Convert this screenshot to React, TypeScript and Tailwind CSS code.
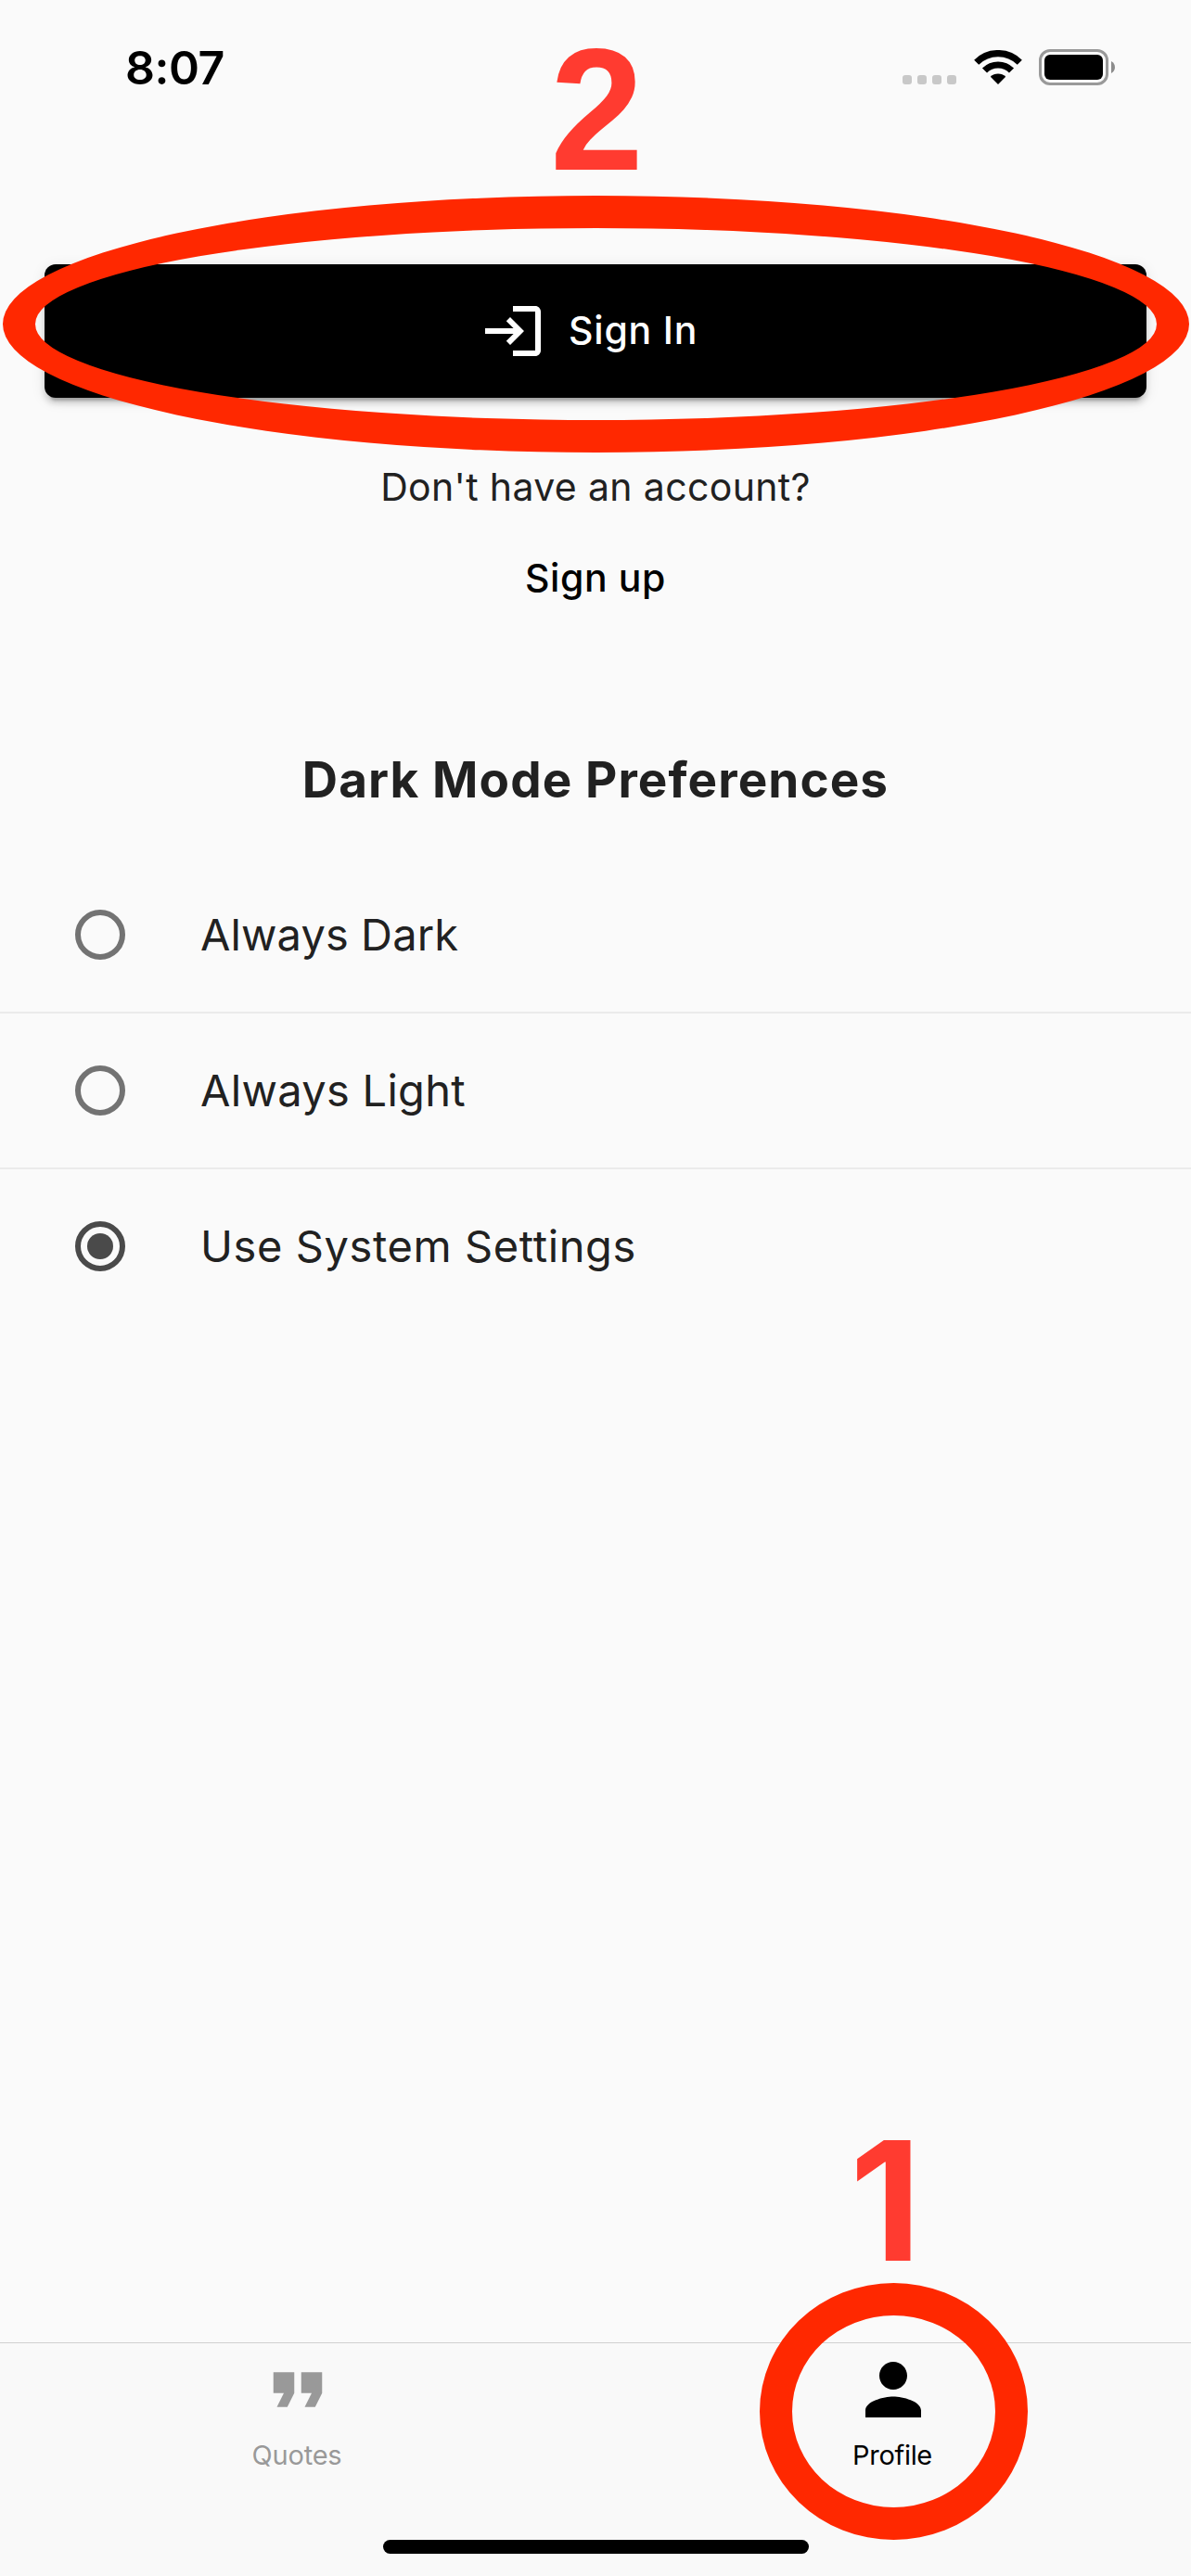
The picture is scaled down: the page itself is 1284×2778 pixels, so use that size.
import React from "react";

function StatusBar() {
  return (
    <header className="flex h-[145px] items-center justify-between pl-[135px] pr-[82px]">
      <span className="text-[50px] leading-[60px] font-semibold tracking-[-0.5px] text-black">8:07</span>
      <div className="flex h-[39px] items-center">
        <div className="mb-px flex items-end gap-[6px] self-end">
          {[0, 1, 2, 3].map((dot) => (
            <span key={dot} className="size-[10px] rounded-[3px] bg-[#c8c8c8]" />
          ))}
        </div>
        <svg className="ml-[19px] h-[37px] w-[52px]" viewBox="-1 0 52 37" fill="none" stroke="#000">
          <path d="M1.7 13.2a33 33 0 0 1 46.6 0" strokeWidth="7.2" />
          <path d="M10.5 22a20.5 20.5 0 0 1 29 0" strokeWidth="7.2" />
          <path d="M25 37l-8.2-8.3a11.8 11.8 0 0 1 16.4 0z" fill="#000" stroke="none" />
        </svg>
        <div className="ml-[18px] flex h-[39px] w-[75px] rounded-[12px] border-3 border-[#999] p-[3px]">
          <div className="flex-1 rounded-[6px] bg-black" />
        </div>
        <svg className="ml-[3px] h-[13px] w-[4px]" viewBox="0 0 4 13">
          <path d="M0 0C5.3 2.5 5.3 10.5 0 13z" fill="#8c8c8c" />
        </svg>
      </div>
    </header>
  );
}

function SignIn() {
  return (
    <section className="relative mt-[140px] flex flex-col items-center px-[48px]">
      <button className="flex h-[144px] w-full items-center rounded-[12px] bg-black pl-[469px] text-white shadow-[0_9px_3px_-6px_rgba(0,0,0,0.2),0_6px_6px_rgba(0,0,0,0.14),0_3px_15px_rgba(0,0,0,0.1)]">
        <svg className="size-[72px]" viewBox="0 0 24 24" fill="currentColor">
          <path d="M11 7L9.6 8.4l2.6 2.6H2v2h10.2l-2.6 2.6L11 17l5-5-5-5zm9 12h-8v2h8c1.1 0 2-.9 2-2V5c0-1.1-.9-2-2-2h-8v2h8v14z" />
        </svg>
        <span className="ml-[24px] pb-[2px] text-[41px] leading-[60px] font-medium tracking-[0.8px]">Sign In</span>
      </button>
      <p className="mt-[66px] text-[41px] leading-[60px] tracking-[0.35px] text-[#212121]">Don't have an account?</p>
      <a className="mt-[38px] text-[41px] leading-[60px] font-medium tracking-[0.6px] text-black">Sign up</a>
      <Callout label="2" labelClass="left-[593px] top-[-266px]" ringClass="left-[3px] top-[-74px] w-[1279px] h-[277px]" />
    </section>
  );
}

function Callout({ label, labelClass, ringClass }: { label: string; labelClass: string; ringClass: string }) {
  return (
    <>
      <span
        className={`absolute font-bold leading-[200px] text-[#ff3b30] ${
          label === "1"
            ? "font-['Inter'] text-[179px]"
            : "origin-left scale-x-97 font-['Liberation_Sans'] text-[187px]"
        } ${labelClass}`}
      >
        {label}
      </span>
      <span className={`absolute rounded-[50%] border-[35px] border-[#ff2800] ${ringClass}`} />
    </>
  );
}

const modes = [
  { name: "Always Dark", tracking: "tracking-[0.1px]" },
  { name: "Always Light", tracking: "tracking-[0.3px]" },
  { name: "Use System Settings", tracking: "tracking-[0.6px]" },
];

function Preferences() {
  const selected = 2;
  return (
    <section className="mt-[158px]">
      <h2 className="text-center text-[53px] leading-[60px] font-bold tracking-[1.1px] text-[#212121]">
        Dark Mode Preferences
      </h2>
      <ul className="mt-[54px]">
        {modes.map((mode, i) => (
          <li
            key={mode.name}
            className={`flex h-[168px] items-center border-b-2 pl-[81px] ${
              i < 2 ? "border-[#ebebeb]" : "border-transparent"
            }`}
          >
            <span
              className={`flex size-[54px] items-center justify-center rounded-full border-6 ${
                i === selected ? "border-[#4a4a4a]" : "border-[#737373]"
              }`}
            >
              {i === selected && <span className="size-[28px] rounded-full bg-[#4a4a4a]" />}
            </span>
            <span className={`ml-[81px] text-[47px] leading-[60px] text-[#212121] ${mode.tracking}`}>{mode.name}</span>
          </li>
        ))}
      </ul>
    </section>
  );
}

function TabBar() {
  return (
    <nav className="relative mt-auto flex h-[252px] flex-col border-t border-[#d0d0d0] bg-[#f9f9f9]">
      <div className="grid grid-cols-2 pt-[5px]">
        <div className="flex flex-col items-center text-[#999]">
          <svg className="size-[90px]" viewBox="0 0 24 24" fill="currentColor">
            <path d="M6 17h3l2-4V7H5v6h3zm8 0h3l2-4V7h-6v6h3z" />
          </svg>
          <span className="mt-[6px] pr-[2px] text-[29px] leading-[40px] tracking-[-0.2px]">Quotes</span>
        </div>
        <div className="flex flex-col items-center text-black">
          <svg className="size-[90px]" viewBox="0 0 24 24" fill="currentColor">
            <path d="M12 12c2.21 0 4-1.79 4-4s-1.79-4-4-4-4 1.79-4 4 1.79 4 4 4zm0 2c-2.67 0-8 1.34-8 4v2h16v-2c0-2.66-5.33-4-8-4z" />
          </svg>
          <span className="mt-[6px] pr-[2px] text-[29px] leading-[40px] tracking-[-0.3px]">Profile</span>
        </div>
      </div>
      <div className="mx-auto mt-auto mb-[24px] h-[15px] w-[459px] rounded-full bg-black" />
      <Callout label="1" labelClass="left-[916px] top-[-254px]" ringClass="left-[819px] top-[-65px] w-[289px] h-[277px]" />
    </nav>
  );
}

export default function App() {
  return (
    <div className="flex h-[2778px] w-[1284px] flex-col overflow-hidden bg-[#fafafa] font-['Inter',sans-serif]">
      <StatusBar />
      <SignIn />
      <Preferences />
      <TabBar />
    </div>
  );
}
